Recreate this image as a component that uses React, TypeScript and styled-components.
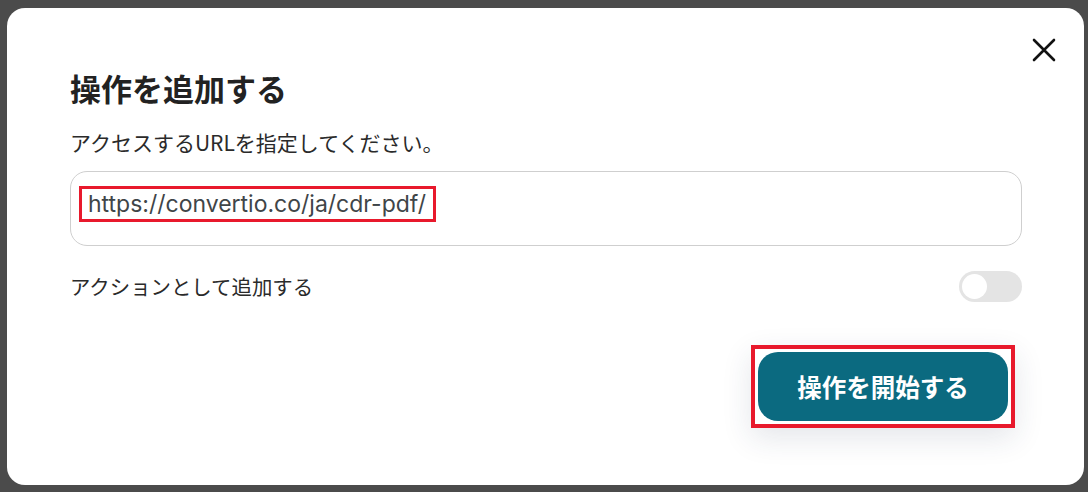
import { createGlobalStyle, styled } from 'styled-components';

const GlobalStyle = createGlobalStyle`
  html, body {
    margin: 0;
    padding: 0;
    background: #4b4b4b;
    font-family: 'Noto Sans CJK JP', 'Noto Sans', sans-serif;
  }
`;

const Page = styled.div`
  width: 1088px;
  height: 492px;
  padding: 8px 4px 7px 7px;
  box-sizing: border-box;
`;

const Modal = styled.div`
  position: relative;
  height: 100%;
  background: #fff;
  border-radius: 18px;
  padding: 62px 63px 0 63px;
  box-sizing: border-box;
  display: flex;
  flex-direction: column;
`;

const Close = styled.button`
  position: absolute;
  top: 30px;
  right: 28px;
  width: 24px;
  height: 24px;
  border: none;
  background: none;
  padding: 0;
  cursor: pointer;
  display: flex;
  align-items: center;
  justify-content: center;
`;

const Title = styled.h2`
  margin: 0;
  font-size: 31px;
  line-height: 36px;
  font-weight: 700;
  color: #222;
`;

const Description = styled.p`
  margin: 22px 0 0;
  font-size: 21px;
  line-height: 28px;
  color: #2a2a2a;
`;

const Field = styled.div`
  margin-top: 15px;
  margin-right: -1px;
  height: 75px;
  border: 1px solid #cfcfcf;
  border-radius: 17px;
  box-sizing: border-box;
  display: flex;
  align-items: flex-start;
  padding: 14px 0 0 8px;
`;

const Highlight = styled.div<{ $width: number }>`
  border-style: solid;
  border-color: #e8192c;
  box-sizing: border-box;
  display: flex;
  align-items: center;
  ${({ $width }) => `border-width: ${$width}px;`}
`;

const UrlText = styled.span`
  font-family: Inter, 'Noto Sans', sans-serif;
  font-size: 23px;
  line-height: 30px;
  color: #3f4548;
  padding: 0 7px 0 6px;
`;

const Row = styled.div`
  margin-top: 25px;
  display: flex;
  align-items: center;
  justify-content: space-between;
`;

const RowLabel = styled.span`
  font-size: 20.4px;
  line-height: 31px;
  color: #2a2a2a;
`;

const Toggle = styled.div`
  width: 63px;
  height: 31px;
  border-radius: 16px;
  background: #e4e4e4;
  margin-right: -1px;
  display: flex;
  align-items: center;
  padding-left: 3px;
  box-sizing: border-box;
`;

const Knob = styled.div`
  width: 25px;
  height: 25px;
  border-radius: 50%;
  background: #fff;
`;

const Footer = styled.div`
  margin-top: 43px;
  display: flex;
  justify-content: flex-end;
  padding-right: 6px;
`;

const ButtonFrame = styled(Highlight)`
  padding: 3px;
  box-shadow: 0 10px 30px rgba(30, 50, 80, 0.12);
`;

const PrimaryButton = styled.button`
  width: 250px;
  height: 69px;
  border: none;
  border-radius: 20px;
  background: #0b6a80;
  color: #fff;
  font-family: 'Noto Sans CJK JP', 'Noto Sans', sans-serif;
  font-size: 24.5px;
  font-weight: 700;
  cursor: pointer;
`;

export default function App() {
  return (
    <>
      <GlobalStyle />
      <Page>
        <Modal>
          <Close aria-label="閉じる">
            <svg width="24" height="24" viewBox="0 0 24 24">
              <path d="M2 2 L22 22 M22 2 L2 22" stroke="#111" strokeWidth="2.6" strokeLinecap="round" />
            </svg>
          </Close>
          <Title>操作を追加する</Title>
          <Description>アクセスするURLを指定してください。</Description>
          <Field>
            <Highlight $width={3}>
              <UrlText>https://convertio.co/ja/cdr-pdf/</UrlText>
            </Highlight>
          </Field>
          <Row>
            <RowLabel>アクションとして追加する</RowLabel>
            <Toggle>
              <Knob />
            </Toggle>
          </Row>
          <Footer>
            <ButtonFrame $width={4}>
              <PrimaryButton>操作を開始する</PrimaryButton>
            </ButtonFrame>
          </Footer>
        </Modal>
      </Page>
    </>
  );
}
